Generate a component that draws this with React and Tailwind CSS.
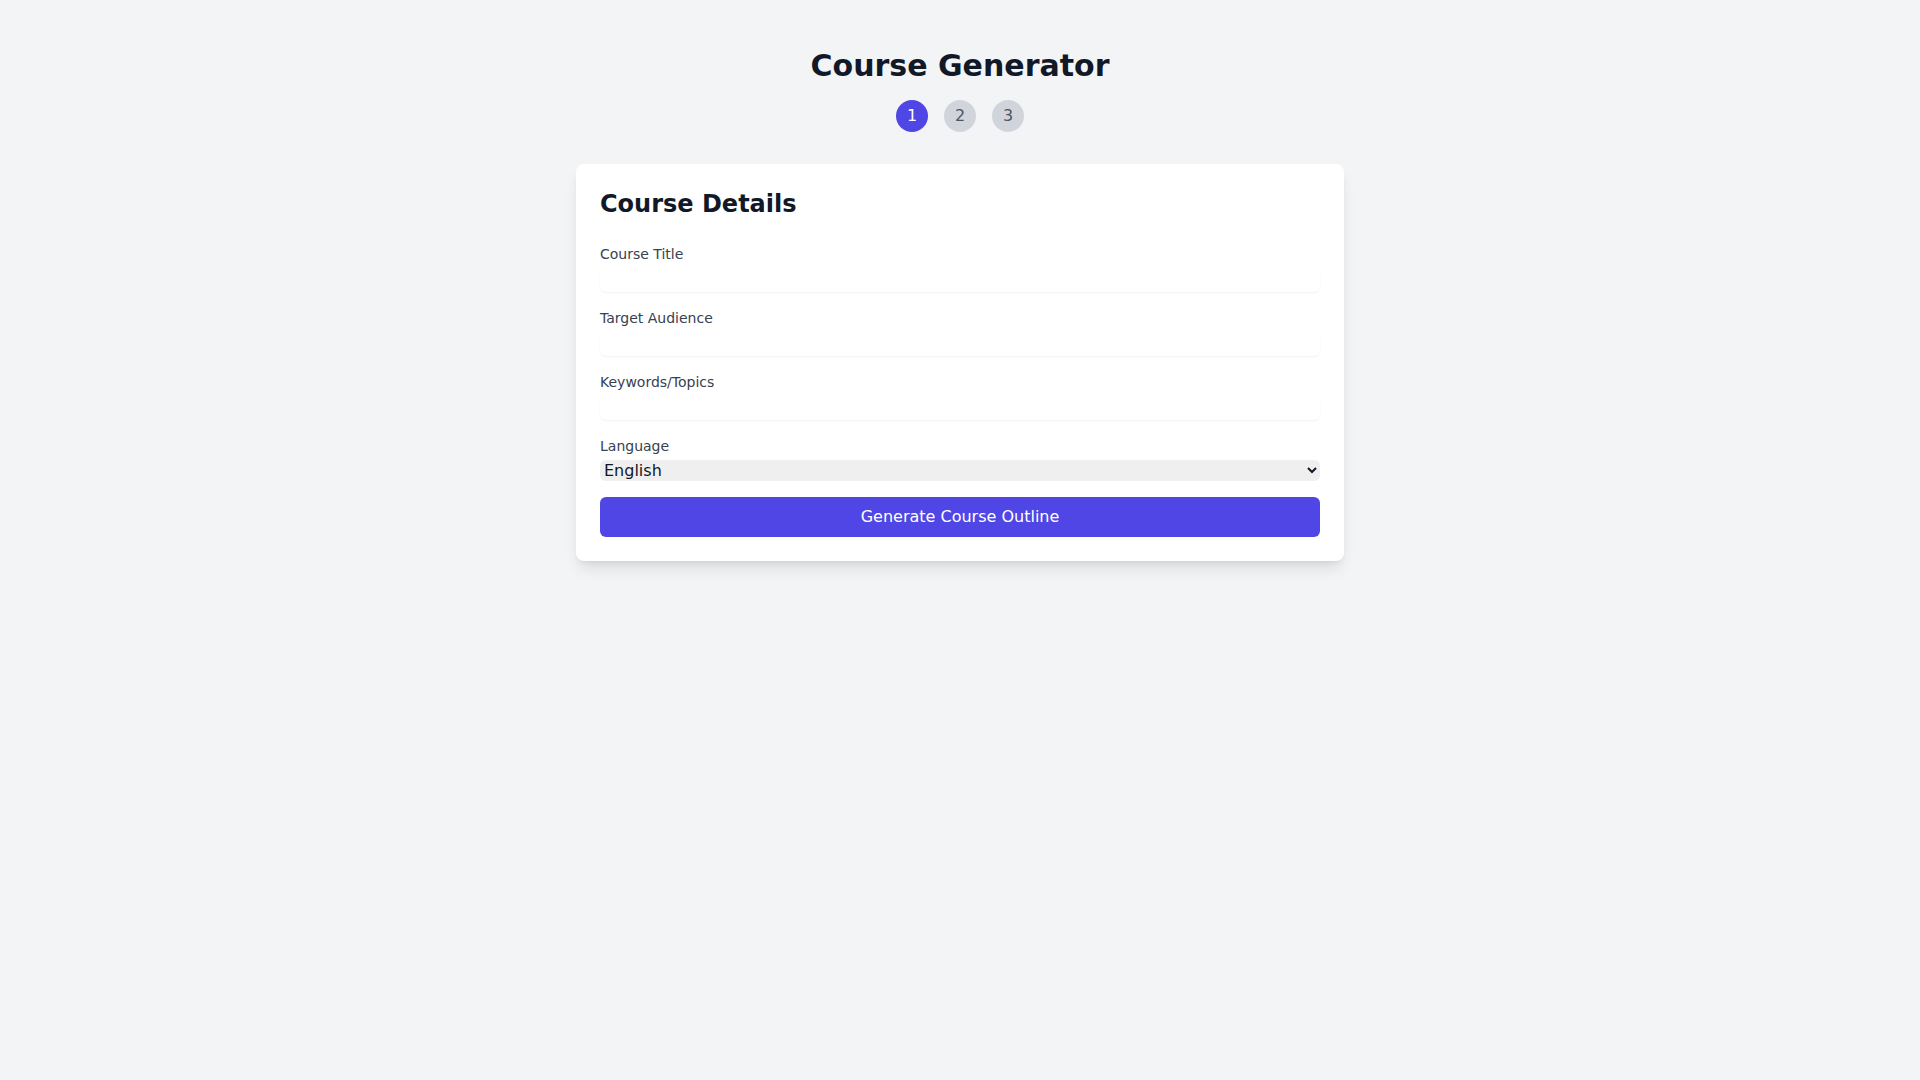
import React from "react";

export default function App() {
  const fields = ["Course Title", "Target Audience", "Keywords/Topics"];
  return (
    <div
      className="min-h-screen bg-[#f3f4f6] py-12 px-4"
      style={{ fontFamily: '"DejaVu Sans", sans-serif' }}
    >
      <div className="max-w-3xl mx-auto">
        <h1 className="text-3xl font-bold text-center text-[#111827] mb-4">Course Generator</h1>
        <div className="flex justify-center gap-4 mb-8">
          <div className="w-8 h-8 rounded-full bg-[#4f46e5] text-white flex items-center justify-center">1</div>
          <div className="w-8 h-8 rounded-full bg-[#d1d5db] text-[#4b5563] flex items-center justify-center">2</div>
          <div className="w-8 h-8 rounded-full bg-[#d1d5db] text-[#4b5563] flex items-center justify-center">3</div>
        </div>
        <div className="bg-white rounded-lg shadow-[0_10px_15px_-3px_rgba(0,0,0,0.1),0_4px_6px_-4px_rgba(0,0,0,0.1)] p-6">
          <h2 className="text-2xl font-bold text-[#111827] mb-6">Course Details</h2>
          <div className="flex flex-col gap-4">
            {fields.map((f) => (
              <div key={f}>
                <label className="block text-sm text-[#374151]">{f}</label>
                <input
                  type="text"
                  className="mt-1 block w-full rounded-md shadow-[0_1px_2px_0_rgba(0,0,0,0.05)] outline-none"
                />
              </div>
            ))}
            <div>
              <label className="block text-sm text-[#374151]">Language</label>
              <select className="mt-1 block w-full rounded-md bg-[#efefef] text-[#111827]">
                <option>English</option>
                <option>Spanish</option>
                <option>French</option>
              </select>
            </div>
            <button className="w-full bg-[#4f46e5] text-white py-2 px-4 rounded-md">
              Generate Course Outline
            </button>
          </div>
        </div>
      </div>
    </div>
  );
}
